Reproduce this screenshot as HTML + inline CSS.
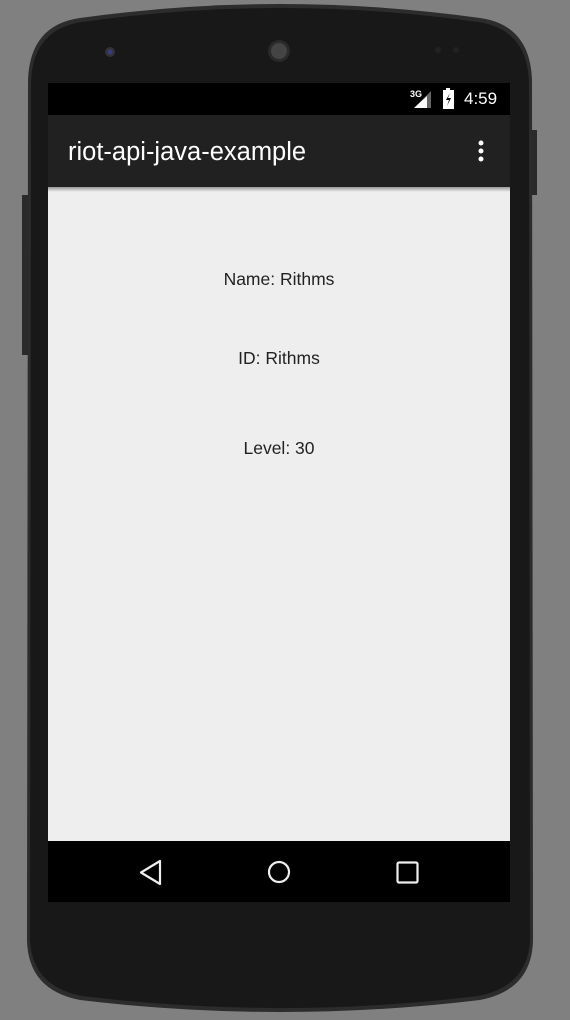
<!DOCTYPE html>
<html><head><style>
html,body{margin:0;padding:0;width:570px;height:1020px;background:#808080;overflow:hidden;font-family:"Liberation Sans",sans-serif}
.abs{position:absolute}
.t{position:absolute;left:48px;width:462px;text-align:center;font-size:17.5px;color:#222}
</style></head><body>
<svg class="abs" style="left:0;top:0" width="570" height="1020">
<path d="M28 80 Q30 25 80 18 Q180 4 280 4 Q380 4 480 18 Q530 25 532 80 L533 940 Q532 990 480 1000 Q380 1012 280 1012 Q180 1012 80 1000 Q28 990 27 940 Z" fill="#2c2c2c"/>
<path d="M31 82 Q33 29 82 22 Q180 8 280 8 Q380 8 478 22 Q527 29 529 82 L530 938 Q529 986 478 996 Q380 1008 280 1008 Q180 1008 82 996 Q31 986 30 938 Z" fill="#181818"/>
<rect x="22" y="195" width="6" height="160" fill="#2a2a2a"/>
<rect x="532" y="130" width="5" height="65" fill="#2a2a2a"/>
<circle cx="110" cy="52" r="5" fill="#333"/><circle cx="110" cy="52" r="2.5" fill="#3a3a80"/>
<circle cx="279" cy="51" r="11" fill="#2a2a2a"/><circle cx="279" cy="51" r="8" fill="#444"/>
<circle cx="438" cy="50" r="3" fill="#222"/><circle cx="456" cy="50" r="3" fill="#222"/>
</svg>
<div class="abs" style="left:48px;top:83px;width:462px;height:32px;background:#000"></div>
<div class="abs" style="left:410px;top:89px;font-size:9px;color:#fff;font-weight:bold">3G</div>
<svg class="abs" style="left:414px;top:90px" width="20" height="20"><path d="M17 1 L17 18 L0 18 Z" fill="#666"/><path d="M13 6 L13 18 L0 18 Z" fill="#fff"/></svg>
<svg class="abs" style="left:442px;top:88px" width="14" height="22"><rect x="4" y="0" width="4" height="2" fill="#fff"/><rect x="1" y="2" width="11" height="19" fill="#fff"/><path d="M8 5 L4 12 L7 12 L5 18 L9 10 L6 10 Z" fill="#000"/></svg>
<div class="abs" style="left:464px;top:89px;font-size:17px;color:#fff">4:59</div>
<div class="abs" style="left:48px;top:115px;width:462px;height:72px;background:#212121"></div>
<div class="abs" style="left:68px;top:138px;font-size:25.5px;color:#fff">riot-api-java-example</div>
<svg class="abs" style="left:476px;top:140px" width="10" height="24"><circle cx="5" cy="3" r="2.5" fill="#fff"/><circle cx="5" cy="11" r="2.5" fill="#fff"/><circle cx="5" cy="19" r="2.5" fill="#fff"/></svg>
<div class="abs" style="left:48px;top:187px;width:462px;height:654px;background:#eeeeee"></div>
<div class="abs" style="left:48px;top:187px;width:462px;height:5px;background:linear-gradient(#999,#eee)"></div>
<div class="t" style="top:269px">Name: Rithms</div>
<div class="t" style="top:348px">ID: Rithms</div>
<div class="t" style="top:438px">Level: 30</div>
<div class="abs" style="left:48px;top:841px;width:462px;height:61px;background:#000"></div>
<svg class="abs" style="left:48px;top:841px" width="462" height="61">
<path d="M112 20 L112 43 L93 31.5 Z" fill="none" stroke="#eee" stroke-width="2.2" stroke-linejoin="round"/>
<circle cx="231" cy="31" r="10" fill="none" stroke="#eee" stroke-width="2.2"/>
<rect x="349.5" y="21.5" width="20" height="20" rx="1.5" fill="none" stroke="#eee" stroke-width="2.2"/>
</svg>
</body></html>
